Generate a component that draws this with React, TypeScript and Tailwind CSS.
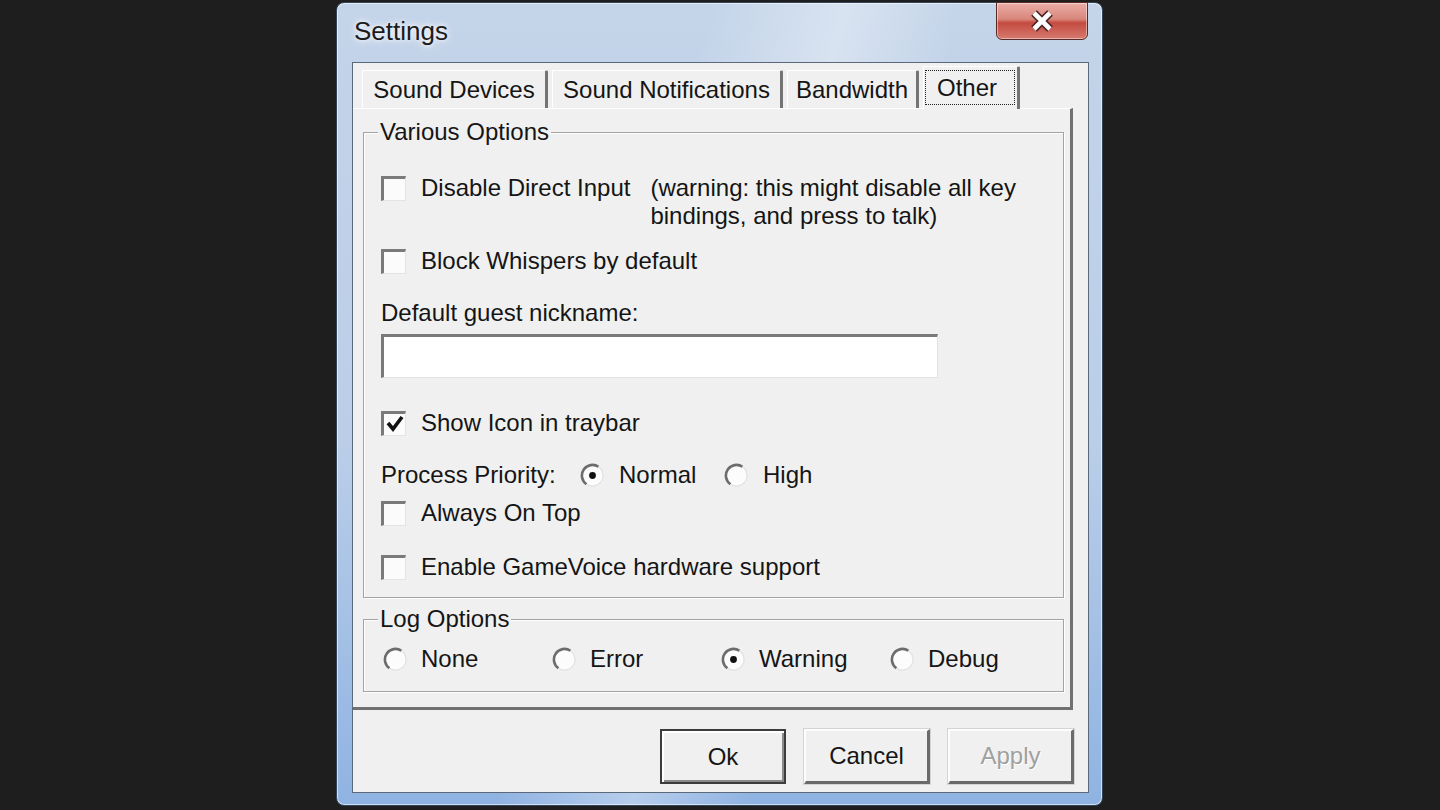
import React from "react";

const FONT = "font-['Liberation_Sans',Arial,sans-serif]";

function Checkbox({ checked }: { checked?: boolean }) {
  return (
    <div className="w-[25px] h-[25px] shrink-0 bg-[#fbfbfb] border-t-[3px] border-l-[3px] border-t-[#7a7a7a] border-l-[#7a7a7a] border-r border-b border-r-[#e4e4e4] border-b-[#e4e4e4] flex items-center justify-center">
      {checked && (
        <svg width="20" height="20" viewBox="0 0 20 20">
          <path d="M3 9 L8 15 L17 3" stroke="#111" strokeWidth="3.6" fill="none" strokeLinejoin="miter" />
        </svg>
      )}
    </div>
  );
}

function Radio({ checked }: { checked?: boolean }) {
  return (
    <svg width="25" height="25" viewBox="0 0 25 25" className="shrink-0">
      <circle cx="12.5" cy="12.5" r="10.5" fill="#fcfcfc" />
      <path d="M 6.5 21.2 A 10.5 10.5 0 0 1 18.5 3.8" stroke="#6c6c6c" strokeWidth="2.6" fill="none" />
      <path d="M 18.5 3.8 A 10.5 10.5 0 0 1 6.5 21.2" stroke="#e2e2e2" strokeWidth="1.2" fill="none" />
      {checked && <circle cx="12.5" cy="12.5" r="3.4" fill="#111" />}
    </svg>
  );
}

function CheckRow({ label, checked, className = "" }: { label: string; checked?: boolean; className?: string }) {
  return (
    <div className={`flex items-center h-[28px] ${className}`}>
      <Checkbox checked={checked} />
      <span className="ml-[15px] whitespace-nowrap">{label}</span>
    </div>
  );
}

function Tab({ label, w }: { label: string; w: string }) {
  return (
    <div
      className={`${w} h-[38px] border-t border-l border-t-white border-l-white border-r-[3px] border-r-[#747474] rounded-tr-[2px] flex items-center justify-center whitespace-nowrap`}
    >
      {label}
    </div>
  );
}

function Button({ label, primary, disabled }: { label: string; primary?: boolean; disabled?: boolean }) {
  const base = "w-[126px] h-[55px] flex items-center justify-center bg-[#f0f0f0]";
  const border = primary
    ? "border-2 border-[#3c3c3c] shadow-[inset_2px_2px_0_#ffffff,inset_-2px_-2px_0_#8a8a8a]"
    : "border-t-2 border-l-2 border-t-[#fdfdfd] border-l-[#fdfdfd] border-r-[3px] border-b-[3px] border-r-[#6a6a6a] border-b-[#6a6a6a] shadow-[0_0_0_1px_#d4d4d4]";
  const text = disabled ? "text-[#a0a0a0] [text-shadow:1px_1px_0_#ffffff]" : "";
  return <div className={`${base} ${border} ${text}`}>{label}</div>;
}

export default function App() {
  return (
    <div className={`w-full h-[810px] bg-[#1e1e1e] flex overflow-hidden ${FONT} text-[#151515]`}>
      <div className="ml-[336px] mt-[2px] w-[767px] h-[804px] rounded-[8px] border border-[#34455a] shadow-[inset_0_0_0_1px_rgba(255,255,255,0.55)] bg-[linear-gradient(105deg,rgba(255,255,255,0)_38%,rgba(255,255,255,0.35)_52%,rgba(255,255,255,0)_64%),linear-gradient(to_bottom,#c4d4e9,#bacee8_55%,#8fb3e2)] flex flex-col pl-[15px] pr-[13px] pb-[12px]">
        {/* Title bar */}
        <div className="h-[59px] shrink-0 flex items-start justify-between">
          <div className="mt-[13px] ml-[2px] text-[26px] leading-[30px] text-[#1c1c1c] [text-shadow:0_0_10px_rgba(255,255,255,0.95),0_0_4px_rgba(255,255,255,0.9)]">
            Settings
          </div>
          <div className="mr-[1px] -mt-[1px] w-[92px] h-[38px] rounded-b-[6px] border border-[#5a2925] bg-[linear-gradient(to_bottom,#eaaea6_0%,#d8867b_45%,#c44a3f_55%,#d67b70_100%)] shadow-[inset_0_0_0_1px_rgba(255,255,255,0.45)] flex items-center justify-center">
            <svg width="30" height="24" viewBox="0 0 30 24">
              <path d="M7 4 L23 20 M23 4 L7 20" stroke="#4a2222" strokeWidth="8" />
              <path d="M7 4 L23 20 M23 4 L7 20" stroke="#ffffff" strokeWidth="4.6" />
            </svg>
          </div>
        </div>

        {/* Client area */}
        <div className="flex-1 border border-[#5c697b] bg-[#f0f0f0] flex flex-col text-[24px] leading-[28px]">
          {/* Tabs */}
          <div className="h-[45px] shrink-0 flex items-end pl-[9px] gap-[4px]">
            <Tab label="Sound Devices" w="w-[186px]" />
            <Tab label="Sound Notifications" w="w-[231px]" />
            <Tab label="Bandwidth" w="w-[132px]" />
            <div className="relative z-10 -mb-[1px] w-[97px] h-[43px] bg-[#f0f0f0] border-t border-l border-t-white border-l-white border-r-[3px] border-r-[#747474] rounded-tr-[2px] flex items-start">
              <div className="mt-[3px] ml-[1px] w-[90px] h-[35px] border border-dotted border-[#222] flex items-center pl-[11px]">
                Other
              </div>
            </div>
          </div>

          {/* Tab panel */}
          <div className="h-[602px] w-[720px] shrink-0 border-t border-t-white border-r-[3px] border-r-[#707070] border-b-[3px] border-b-[#707070] pl-[10px] pt-[9px]">
            <fieldset className="w-[701px] border border-[#a3a3a3] shadow-[inset_1px_1px_0_#ffffff,1px_1px_0_#ffffff]">
              <legend className="ml-[14px] px-[2px] bg-[#f0f0f0]">Various Options</legend>
              <div className="pl-[17px] pt-[28px] pb-[16px]">
                <div className="flex items-start">
                  <div className="mt-[2px]">
                    <Checkbox />
                  </div>
                  <span className="ml-[15px] whitespace-nowrap">Disable Direct Input</span>
                  <span className="ml-[20px] whitespace-nowrap">
                    (warning: this might disable all key
                    <br />
                    bindings, and press to talk)
                  </span>
                </div>
                <CheckRow label="Block Whispers by default" className="mt-[17px]" />
                <div className="mt-[24px] h-[28px]">Default guest nickname:</div>
                <div className="mt-[7px] w-[557px] h-[44px] bg-white border-t-[3px] border-l-[3px] border-t-[#7a7a7a] border-l-[#7a7a7a] border-r border-b border-r-[#e2e2e2] border-b-[#e2e2e2]" />
                <CheckRow label="Show Icon in traybar" checked className="mt-[31px]" />
                <div className="mt-[24px] h-[28px] flex items-center">
                  <span className="w-[199px] whitespace-nowrap">Process Priority:</span>
                  <div className="w-[144px] flex items-center gap-[14px]">
                    <Radio checked />
                    <span>Normal</span>
                  </div>
                  <div className="flex items-center gap-[14px]">
                    <Radio />
                    <span>High</span>
                  </div>
                </div>
                <CheckRow label="Always On Top" className="mt-[10px]" />
                <CheckRow label="Enable GameVoice hardware support" className="mt-[26px]" />
              </div>
            </fieldset>

            <fieldset className="mt-[7px] w-[701px] border border-[#a3a3a3] shadow-[inset_1px_1px_0_#ffffff,1px_1px_0_#ffffff]">
              <legend className="ml-[14px] px-[2px] bg-[#f0f0f0]">Log Options</legend>
              <div className="pl-[19px] pt-[12px] pb-[18px] flex items-center h-[58px]">
                {[
                  ["None", false],
                  ["Error", false],
                  ["Warning", true],
                  ["Debug", false],
                ].map(([label, on]) => (
                  <div key={label as string} className="w-[169px] flex items-center gap-[13px]">
                    <Radio checked={on as boolean} />
                    <span>{label as string}</span>
                  </div>
                ))}
              </div>
            </fieldset>
          </div>

          {/* Buttons */}
          <div className="flex-1 flex justify-end items-start gap-[18px] pt-[19px] pr-[14px]">
            <Button label="Ok" primary />
            <Button label="Cancel" />
            <Button label="Apply" disabled />
          </div>
        </div>
      </div>
    </div>
  );
}
